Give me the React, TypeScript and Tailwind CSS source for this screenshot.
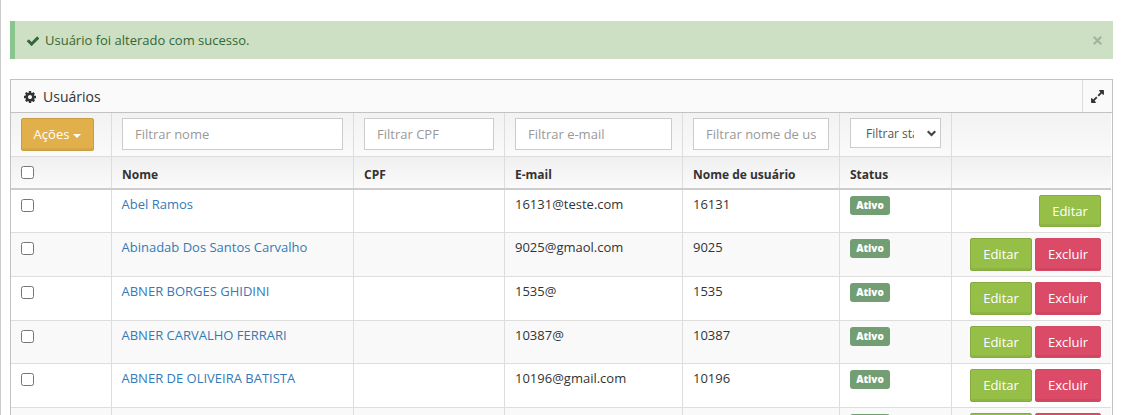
import React from "react";

type User = { name: string; email: string; username: string; removable: boolean; height: string; pad: string };

const users: User[] = [
  { name: "Abel Ramos", email: "16131@teste.com", username: "16131", removable: false, height: "h-[43px]", pad: "h-8" },
  { name: "Abinadab Dos Santos Carvalho", email: "9025@gmaol.com", username: "9025", removable: true, height: "h-11", pad: "h-[33px]" },
  { name: "ABNER BORGES GHIDINI", email: "1535@", username: "1535", removable: true, height: "h-11", pad: "h-[33px]" },
  { name: "ABNER CARVALHO FERRARI", email: "10387@", username: "10387", removable: true, height: "h-[43px]", pad: "h-8" },
  { name: "ABNER DE OLIVEIRA BATISTA", email: "10196@gmail.com", username: "10196", removable: true, height: "h-11", pad: "h-[33px]" },
  { name: "", email: "", username: "", removable: true, height: "h-11", pad: "h-[33px]" },
];

const columns = "grid grid-cols-[101px_242px_151px_178px_157px_112px_159px]";
const cell = "border-r border-[#ddd] pl-[10px] last:border-r-0";

const icons = {
  check:
    "M1671 566q0 40-28 68l-724 724-136 136q-28 28-68 28t-68-28l-136-136-362-362q-28-28-28-68t28-68l136-136q28-28 68-28t68 28l294 295 656-657q28-28 68-28t68 28l136 136q28 28 28 68z",
  cog: "M1152 896q0-106-75-181t-181-75-181 75-75 181 75 181 181 75 181-75 75-181zm512-109v222q0 12-8 23t-20 13l-185 28q-19 54-39 91 35 50 107 138 10 12 10 25t-9 23q-27 37-99 108t-94 71q-12 0-26-9l-138-108q-44 23-91 38-16 136-29 186-7 28-36 28h-222q-14 0-24.5-8.5t-11.5-21.5l-28-184q-49-16-90-37l-141 107q-10 9-25 9-14 0-25-11-126-114-165-168-7-10-7-23 0-12 8-23 15-21 51-66.5t54-70.5q-27-50-41-99l-183-27q-13-2-21-12.5t-8-23.5v-222q0-12 8-23t19-13l186-28q14-46 39-92-40-57-107-138-10-12-10-24 0-10 9-23 26-36 98.5-107.5t94.5-71.5q13 0 26 10l138 107q44-23 91-38 16-136 29-186 7-28 36-28h222q14 0 24.5 8.5t11.5 21.5l28 184q49 16 90 37l142-107q9-9 24-9 13 0 25 10 129 119 165 170 7 8 7 22 0 12-8 23-15 21-51 66.5t-54 70.5q26 50 41 98l183 28q13 2 21 12.5t8 23.5z",
  expand:
    "M883 1056q0 13-10 23l-332 332 144 144q19 19 19 45t-19 45-45 19h-448q-26 0-45-19t-19-45v-448q0-26 19-45t45-19 45 19l144 144 332-332q10-10 23-10t23 10l114 114q10 10 10 23zm781-864v448q0 26-19 45t-45 19-45-19l-144-144-332 332q-10 10-23 10t-23-10l-114-114q-10-10-10-23t10-23l332-332-144-144q-19-19-19-45t19-45 45-19h448q26 0 45 19t19 45z",
};

function Icon({ name, className }: { name: keyof typeof icons; className: string }) {
  return (
    <svg className={`shrink-0 ${className}`} viewBox="0 0 1792 1792" fill="currentColor">
      <path d={icons[name]} />
    </svg>
  );
}

function Checkbox({ label }: { label: string }) {
  return (
    <input
      type="checkbox"
      aria-label={label}
      className="block size-[13px] appearance-none rounded-[2.5px] border border-[#767676] bg-white"
    />
  );
}

function Filter({ text, width }: { text: string; width: string }) {
  return (
    <input
      placeholder={text}
      className={`${width} block h-8 border border-[#ccc] bg-white px-3 text-[13px] text-[#555] placeholder:text-[#999]`}
    />
  );
}

function EditButton({ height }: { height: string }) {
  return (
    <button className={`${height} w-[62px] rounded-[2px] border border-[#87ab42] bg-[#96bf48] pb-px text-[13px] leading-5 text-white shadow-[inset_0_-2px_0_rgba(0,0,0,0.05)]`}>
      Editar
    </button>
  );
}

function DeleteButton({ height }: { height: string }) {
  return (
    <button className={`${height} w-[66px] rounded-[2px] border border-[#d24a64] bg-[#db4a67] pb-px text-[13px] leading-5 text-white shadow-[inset_0_-2px_0_rgba(0,0,0,0.05)]`}>
      Excluir
    </button>
  );
}

export default function App() {
  return (
    <div className="h-[415px] overflow-hidden border-l border-[#ccc] bg-white pt-[21px] pr-2 pl-[9px] font-['Open_Sans',sans-serif] text-[13px] text-[#333]">
      <div className="flex h-[38px] items-center border-l-[5px] border-[#89c68d] bg-[#cde0c4] pr-[11px] pl-[11px] text-[#356635]">
        <Icon name="check" className="mt-px mr-[5px] size-[14px]" />
        <span className="pt-0.5">Usuário foi alterado com sucesso.</span>
        <svg className="mt-px ml-auto size-[9px] text-[#a4b39d]" viewBox="0 0 9 9" stroke="currentColor" strokeWidth="2.2">
          <path d="M.8.8l7.4 7.4M8.2.8L.8 8.2" />
        </svg>
      </div>

      <section className="mt-5 h-[400px] border border-[#c2c2c2]">
        <header className="flex h-[33px] items-center border-b border-[#c2c2c2] bg-[#fafafa]">
          <Icon name="cog" className="mt-0.5 mr-[6px] ml-3 size-[14px]" />
          <h2 className="text-[14px]">Usuários</h2>
          <button aria-label="Expandir" className="ml-auto flex h-full w-[30px] items-center justify-center border-l border-[#ddd]">
            <Icon name="expand" className="size-[15px]" />
          </button>
        </header>

        <div className="w-[1100px]">
          <div className={`${columns} h-11 border-b border-[#ddd] bg-linear-to-b from-[#f2f2f2] to-[#fafafa]`}>
            <div className={`${cell} pt-[5px]`}>
              <button className="flex h-[33px] w-[73px] items-center justify-center gap-1 rounded-[2px] border border-[#c79d43] bg-[#e2b04a] pt-px text-white shadow-[inset_0_-2px_0_rgba(0,0,0,0.05)]">
                Ações
                <span className="mt-px border-x-4 border-t-4 border-x-transparent border-t-white" />
              </button>
            </div>
            <div className={`${cell} pt-[5px]`}><Filter text="Filtrar nome" width="w-[221px]" /></div>
            <div className={`${cell} pt-[5px]`}><Filter text="Filtrar CPF" width="w-[130px]" /></div>
            <div className={`${cell} pt-[5px]`}><Filter text="Filtrar e-mail" width="w-[157px]" /></div>
            <div className={`${cell} pt-[5px]`}><Filter text="Filtrar nome de usuário" width="w-[136px]" /></div>
            <div className={`${cell} pt-[5px]`}>
              <button className="flex h-[30px] w-[91px] items-center border border-[#ccc] bg-white pl-[15px] text-[12px] text-[#555]">
                <span className="w-12 overflow-hidden pt-0.5 text-left whitespace-nowrap">Filtrar status</span>
                <svg className="ml-[13px] h-[7px] w-[9px] shrink-0" viewBox="0 0 9 7" fill="none" stroke="#444" strokeWidth="2.2">
                  <path d="M.7 1.2l3.8 3.8 3.8-3.8" />
                </svg>
              </button>
            </div>
            <div className={cell} />
          </div>

          <div className={`${columns} h-[33px] border-b-2 border-[#ccc] bg-linear-to-b from-[#f0f0f0] to-[#fafafa] text-[12px] font-bold`}>
            <div className={`${cell} pt-[9px]`}><Checkbox label="Selecionar todos" /></div>
            <div className={`${cell} pt-[9px] leading-[18px]`}>Nome</div>
            <div className={`${cell} pt-[9px] leading-[18px]`}>CPF</div>
            <div className={`${cell} pt-[9px] leading-[18px]`}>E-mail</div>
            <div className={`${cell} pt-[9px] leading-[18px]`}>Nome de usuário</div>
            <div className={`${cell} pt-[9px] leading-[18px]`}>Status</div>
            <div className={cell} />
          </div>

          {users.map((user, index) => (
            <div key={index} className={`${columns} ${user.height} border-b border-[#ddd] odd:bg-white even:bg-[#f9f9f9]`}>
              <div className={`${cell} pt-[9px]`}><Checkbox label={user.name} /></div>
              <div className="border-r border-[#ddd] pt-[5px] pl-[9.5px] leading-[18px] text-[#337ab7]">{user.name}</div>
              <div className={cell} />
              <div className={`${cell} pt-[5px] leading-[18px]`}>{user.email}</div>
              <div className={`${cell} pt-[5px] leading-[18px]`}>{user.username}</div>
              <div className={`${cell} pt-[6px]`}>
                <span className="flex h-[19px] w-10 items-center justify-center rounded-[3px] bg-[#739e73] text-[10px] font-extrabold text-white">Ativo</span>
              </div>
              <div className="flex gap-[3px] pt-[5px] pr-[10px]">
                <span className="grow" />
                <EditButton height={user.pad} />
                {user.removable && <DeleteButton height={user.pad} />}
              </div>
            </div>
          ))}
        </div>
      </section>
    </div>
  );
}
